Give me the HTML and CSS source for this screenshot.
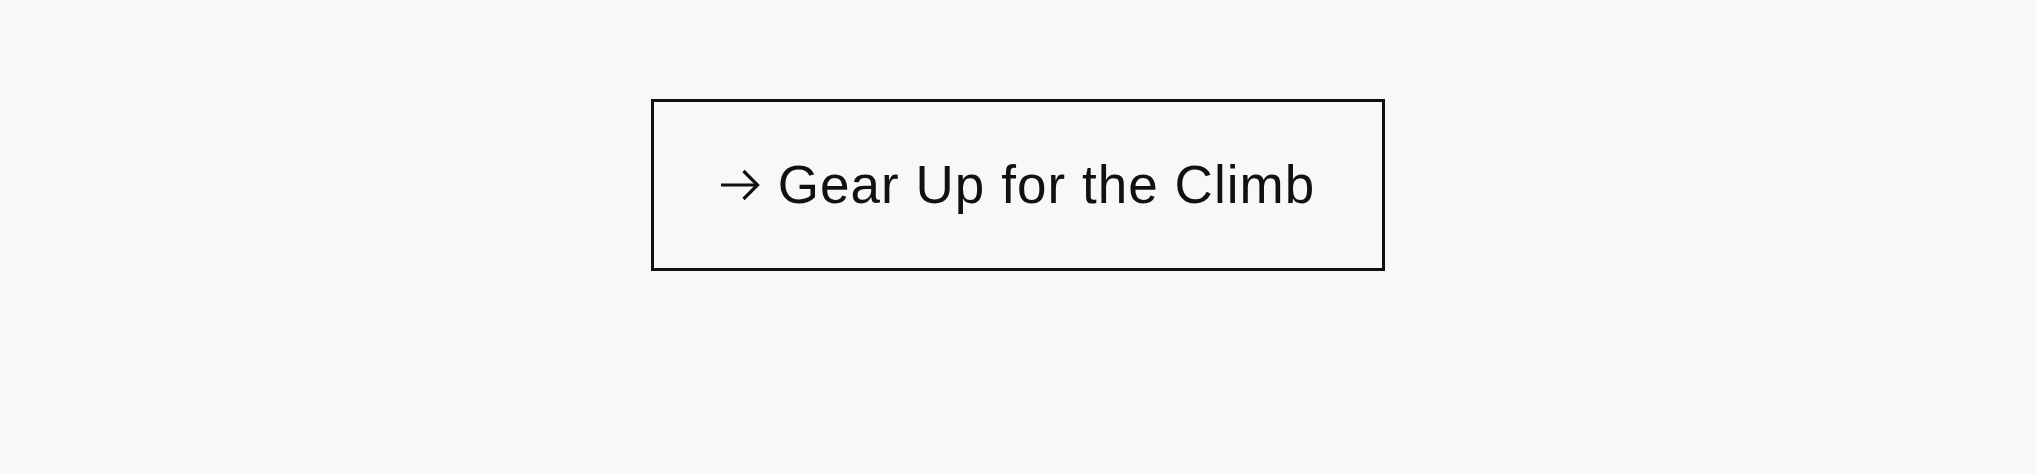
FILE: index.html
```html
<!DOCTYPE html>
<html lang="en">
  <head>
    <meta charset="UTF-8" />
    <meta name="viewport" content="width=device-width, initial-scale=1.0" />
    <title>Gear Up for the Climb</title>
    <link rel="stylesheet" href="styles.css">
  </head>
  <body>
    <div class="page">
      <a class="cta" href="#">
        <svg class="cta-arrow" width="39" height="32" viewBox="0 0 39 32" fill="none" stroke="currentColor" stroke-width="3.2">
          <line x1="0" y1="16" x2="36" y2="16" />
          <polyline points="22.5,2 36.5,16 22.5,30" />
        </svg>
        <span class="cta-label">Gear Up for the Climb</span>
      </a>
    </div>
  </body>
</html>
```

FILE: styles.css
```css
* {
  margin: 0;
  padding: 0;
  box-sizing: border-box;
}

body {
  font-family: "Liberation Sans", Arial, sans-serif;
  background: #f7f8fa;
  color: #111;
}

.page {
  display: flex;
  justify-content: center;
  padding-top: 99px;
}

.cta {
  display: flex;
  align-items: center;
  justify-content: center;
  gap: 18px;
  width: 734px;
  height: 172px;
  border: 3px solid #111;
  color: #111;
  text-decoration: none;
  font-size: 53px;
  letter-spacing: 0.02em;
}

.cta-arrow {
  flex-shrink: 0;
}

.cta-label {
  line-height: 1;
  padding-bottom: 2px;
}
```
